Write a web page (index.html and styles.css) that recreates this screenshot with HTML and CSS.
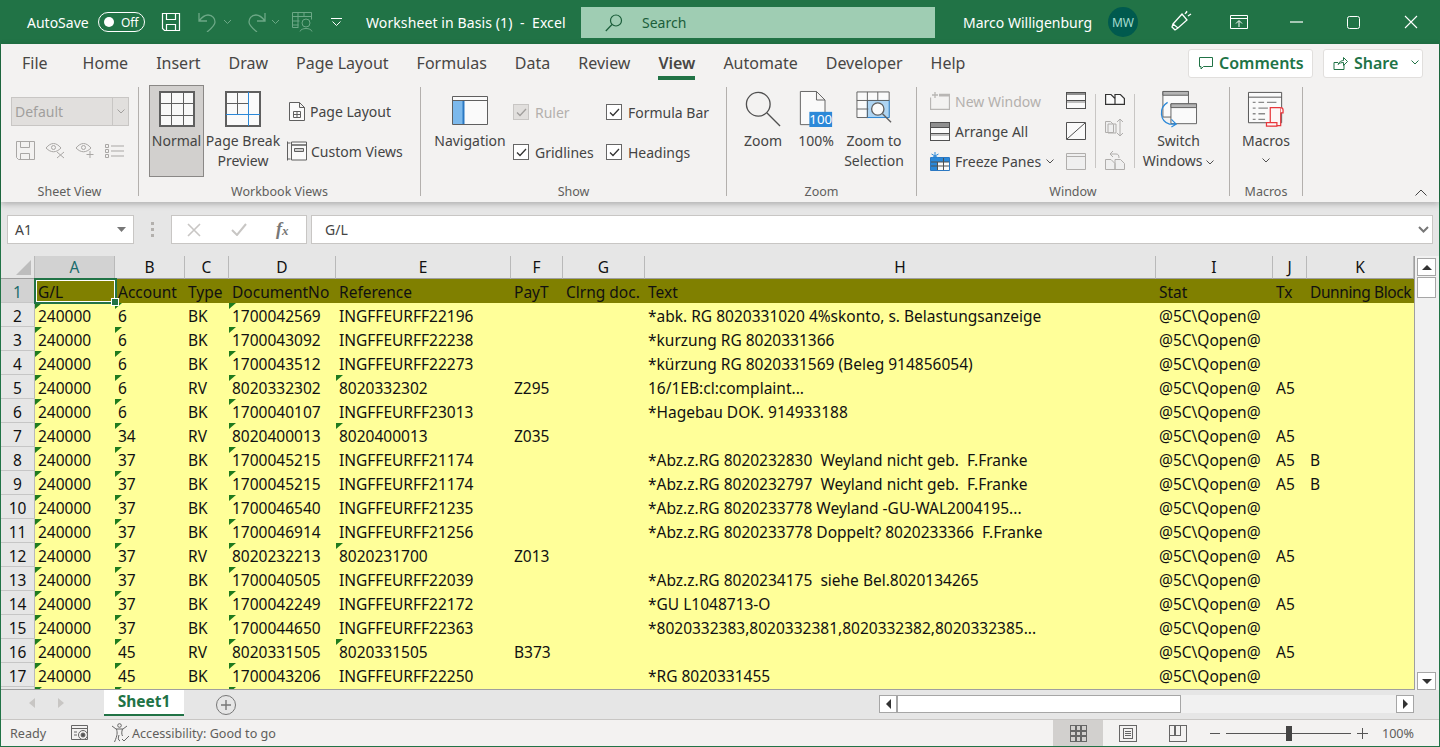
FILE: index.html
```html
<!DOCTYPE html>
<html lang="en">
<head>
    <meta charset="UTF-8">
    <meta name="viewport" content="width=device-width, initial-scale=1.0">
    <title>Worksheet in Basis (1) - Excel</title>
    <link rel="stylesheet" href="styles.css">
</head>
<body>
<div class="app">
    <!-- title bar -->
    <div class="titlebar">
        <span class="autosave">AutoSave</span>
        <span class="toggle"><i></i>Off</span>
        <svg class="qa-save" width="20" height="20" viewBox="0 0 20 20" fill="none" stroke="#fff" stroke-width="1.200"><path d="M1.500 1.500h17v17h-15l-2-2z"/><path d="M5.500 1.500v6h9v-6M5.500 18.500v-6h9v6"/></svg>
        <svg class="qa-undo" width="22" height="20" viewBox="0 0 22 20" fill="none" stroke="#6ca886" stroke-width="1.300"><path d="M2 1v8h8M2 9c3-4 6-6 9-6 5 0 7 4 7 7 0 3-3 6-8 10"/></svg>
        <svg class="qa-chev" width="9" height="6" viewBox="0 0 9 6" fill="none" stroke="#6ca886"><path d="M1 1l3.500 3.500L8 1"/></svg>
        <svg class="qa-redo" width="22" height="20" viewBox="0 0 22 20" fill="none" stroke="#6ca886" stroke-width="1.300"><path d="M20 1v8h-8M20 9c-3-4-6-6-9-6-5 0-7 4-7 7 0 3 3 6 8 10"/></svg>
        <svg class="qa-chev" width="9" height="6" viewBox="0 0 9 6" fill="none" stroke="#6ca886"><path d="M1 1l3.500 3.500L8 1"/></svg>
        <svg class="qa-table" width="21" height="20" viewBox="0 0 21 20" fill="none" stroke="#6ca886"><path d="M.5.500h19v7M.5.500v15h6M.5 4.500h19M.5 9h7M.5 13h6M6 1v14M12 1v4"/><circle cx="14" cy="11" r="4"/><path d="M8 19.500c1-4 11-4 12 0"/></svg>
        <svg class="qa-more" width="11" height="9" viewBox="0 0 11 9" fill="none" stroke="#fff"><path d="M0 .5h11M1.500 3.500L5.500 7.500l4-4"/></svg>
        <span class="doc-title">Worksheet in Basis (1)  -  Excel</span>
        <div class="searchbox">
            <svg width="18" height="18" viewBox="0 0 18 18" fill="none" stroke="#1b5e3a" stroke-width="1.200"><circle cx="11" cy="6.500" r="5.500"/><path d="M7 10.500L.8 17"/></svg>
            <span>Search</span>
        </div>
        <span class="username">Marco Willigenburg</span>
        <span class="avatar">MW</span>
        <svg class="tb-feedback" width="21" height="21" viewBox="0 0 21 21" fill="none" stroke="#fff" stroke-width="1.300"><path d="M2 14L11 4l5 6-9 8zM2 14l-1 3 3 3 3-2M14 4l2-3M17 6l3-2M15.500 2.500l.5.5"/></svg>
        <svg class="tb-display" width="18" height="14" viewBox="0 0 18 14" fill="none" stroke="#fff"><path d="M.5.500h17v13H.5zM.5 3.500h17M9 12V6M6 8.500L9 5.500l3 3"/></svg>
        <svg class="tb-min" width="13" height="2" viewBox="0 0 13 2"><path d="M0 1h13" stroke="#fff" stroke-width="1.200"/></svg>
        <svg class="tb-max" width="13" height="13" viewBox="0 0 13 13" fill="none" stroke="#fff"><rect x=".5" y=".5" width="12" height="12" rx="2"/></svg>
        <svg class="tb-close" width="14" height="14" viewBox="0 0 14 14" fill="none" stroke="#fff" stroke-width="1.100"><path d="M1 1l12 12M13 1L1 13"/></svg>
    </div>

    <!-- ribbon tabs -->
    <div class="ribbon">
        <div class="tabs">
            <span class="tab tab-file">File</span>
            <span class="tab">Home</span>
            <span class="tab">Insert</span>
            <span class="tab">Draw</span>
            <span class="tab">Page Layout</span>
            <span class="tab">Formulas</span>
            <span class="tab">Data</span>
            <span class="tab">Review</span>
            <span class="tab tab-active">View</span>
            <span class="tab">Automate</span>
            <span class="tab">Developer</span>
            <span class="tab">Help</span>
            <span class="tab-actions">
                <span class="action action-comments">
                    <svg width="14" height="14" viewBox="0 0 14 14" fill="none" stroke="#217346"><path d="M.5 1.500h13v9H4.500l-2.500 2.500v-2.500H.5z"/></svg>
                    Comments
                </span>
                <span class="action action-share">
                    <svg width="15" height="14" viewBox="0 0 15 14" fill="none" stroke="#217346"><path d="M1 13.500V6.500h4M1 13.500h10V9M5 8.500c1-3 4-4 5.500-4V1.500l4 4-4 4v-3c-2 0-4 .5-5.500 2z"/></svg>
                    Share
                    <svg class="share-chev" width="8" height="5" viewBox="0 0 8 5" fill="none" stroke="#217346"><path d="M.5.5L4 4 7.500.5"/></svg>
                </span>
            </span>
        </div>

        <!-- ribbon groups -->
        <div class="ribbon-body">
            <div class="group group-sheetview">
                <div class="group-main">
                    <div class="sheetview-col">
                        <div class="view-select"><span>Default</span><b><svg width="8" height="5" viewBox="0 0 8 5" fill="none" stroke="#a19f9d"><path d="M.5.5L4 4 7.500.5"/></svg></b></div>
                        <div class="sheetview-icons">
                            <svg width="19" height="19" viewBox="0 0 19 19" fill="none" stroke="#a9a7a5"><path d="M.5.500h18v18H2.500l-2-2z"/><path d="M4.500.5v6h9v-6M4.500 18.500v-6h9v6"/></svg>
                            <svg width="20" height="17" viewBox="0 0 20 17" fill="none" stroke="#a9a7a5"><path d="M1 6c5-6 10-6 15 0-5 5-10 5-15 0z"/><circle cx="8.500" cy="5.500" r="2"/><path d="M12 10l7 6M19 10l-7 6"/></svg>
                            <svg width="20" height="17" viewBox="0 0 20 17" fill="none" stroke="#a9a7a5"><path d="M1 6c5-6 10-6 15 0-5 5-10 5-15 0z"/><circle cx="8.500" cy="5.500" r="2"/><path d="M15 9v7M11.500 12.500h7"/></svg>
                            <svg width="19" height="14" viewBox="0 0 19 14" fill="none" stroke="#a9a7a5"><path d="M.5.500h3v3h-3zM.5 5.500h3v3h-3zM.5 10.500h3v3h-3zM6 2h13M6 7h13M6 12h13"/></svg>
                        </div>
                    </div>
                </div>
                <div class="group-label">Sheet View</div>
            </div>
            <div class="sep"></div>

            <div class="group group-workbook">
                <div class="group-main">
                    <div class="big big-normal active">
                        <svg class="big-icon" width="36" height="36" viewBox="0 0 36 36" fill="#f8f8f8" stroke="#5f5f5f" shape-rendering="crispEdges"><path d="M1 1h34v34H1z" stroke-width="2"/><path d="M12.500 1v34M24.500 1v34M1 12.500h34M1 24.500h34" fill="none"/></svg>
                        <span>Normal</span>
                    </div>
                    <div class="big big-break">
                        <svg class="big-icon" width="36" height="36" viewBox="0 0 36 36" fill="#fafafa" stroke="#5f5f5f" shape-rendering="crispEdges"><path d="M1 1h34v34H1z" stroke-width="2"/><path d="M12.500 1v22M1 12.500h22" fill="none"/><path d="M23.500 1v34M1 23.500h34" fill="none" stroke="#2b88d8" stroke-width="1"/></svg>
                        <span>Page Break<br>Preview</span>
                    </div>
                    <div class="small-col workbook-small">
                        <div class="small small-layout">
                            <svg width="16" height="19" viewBox="0 0 16 19" fill="#fafafa" stroke="#5f5f5f"><path d="M.5.500h10l5 5v13H.5zM10.500.5v5h5"/><path d="M4.500 9.500h7v6h-7zM8 9.500v6M4.500 12.500h7" fill="none"/></svg>
                            Page Layout
                        </div>
                        <div class="small small-custom">
                            <svg width="20" height="20" viewBox="0 0 20 20" fill="#fafafa" stroke="#5f5f5f"><path d="M.5.500v19M.5 2h3M.5 18h3M4.500 1h15v3h-15zM4.500 4h15v15h-15z"/><path d="M7.500 7.500h9v3h-9z" fill="#d0d0d0"/></svg>
                            Custom Views
                        </div>
                    </div>
                </div>
                <div class="group-label">Workbook Views</div>
            </div>
            <div class="sep"></div>

            <div class="group group-show">
                <div class="group-main">
                    <div class="big big-nav">
                        <svg class="big-icon" width="36" height="36" viewBox="0 0 36 36" fill="#fafafa" stroke="#5f5f5f"><path d="M.5 5.500h35v28H.5zM.5 9.500h35"/><path d="M1 10h11v23H1z" fill="#7cb9ec" stroke="none"/><path d="M11.500 10v23" stroke="#2b78c2" stroke-width="2"/></svg>
                        <span>Navigation</span>
                    </div>
                    <div class="check-col">
                        <label class="check disabled"><i><svg width="11" height="9" viewBox="0 0 11 9" fill="none" stroke="#a19f9d" stroke-width="1.300"><path d="M1 4.500L4 7.500 10 1"/></svg></i>Ruler</label>
                        <label class="check"><i><svg width="11" height="9" viewBox="0 0 11 9" fill="none" stroke="#333" stroke-width="1.300"><path d="M1 4.500L4 7.500 10 1"/></svg></i>Gridlines</label>
                    </div>
                    <div class="check-col check-col-2">
                        <label class="check"><i><svg width="11" height="9" viewBox="0 0 11 9" fill="none" stroke="#333" stroke-width="1.300"><path d="M1 4.500L4 7.500 10 1"/></svg></i>Formula Bar</label>
                        <label class="check"><i><svg width="11" height="9" viewBox="0 0 11 9" fill="none" stroke="#333" stroke-width="1.300"><path d="M1 4.500L4 7.500 10 1"/></svg></i>Headings</label>
                    </div>
                </div>
                <div class="group-label">Show</div>
            </div>
            <div class="sep"></div>

            <div class="group group-zoom">
                <div class="group-main">
                    <div class="big big-zoom">
                        <svg class="big-icon" width="38" height="38" viewBox="0 0 38 38" fill="none" stroke="#505050" stroke-width="1.400"><circle cx="14" cy="14" r="12.500"/><path d="M23 23l14 14"/></svg>
                        <span>Zoom</span>
                    </div>
                    <div class="big big-100">
                        <svg class="big-icon" width="36" height="38" viewBox="0 0 36 38" fill="#fafafa" stroke="#5f5f5f"><path d="M1.500.5h17l9 9v26h-26zM18.500.5v9h9"/><path d="M11 22h24v16H11z" fill="#2b88d8" stroke="none"/><text x="23" y="35" class="pct-text">100</text></svg>
                        <span>100%</span>
                    </div>
                    <div class="big big-zoomsel">
                        <svg class="big-icon" width="38" height="38" viewBox="0 0 38 38" fill="#fafafa" stroke="#5f5f5f"><path d="M1 1h34v27H1z"/><path d="M12 10h23v18H12z" fill="#aed4f2" stroke="#2b88d8"/><path d="M1 10h34M1 19h12M12 1v27M23 1v9"/><circle cx="23" cy="19" r="6.500" fill="#fafafa" stroke-width="1.400"/><path d="M28 24l9 9" stroke-width="1.400"/></svg>
                        <span>Zoom to<br>Selection</span>
                    </div>
                </div>
                <div class="group-label">Zoom</div>
            </div>
            <div class="sep"></div>

            <div class="group group-window">
                <div class="group-main">
                    <div class="small-col window-small">
                        <div class="wrow disabled">
                            <svg width="20" height="18" viewBox="0 0 20 18" fill="none" stroke="#b8b6b4" stroke-width="1.300"><path d="M9 2.500h10.500v15H.5V5.500M5 0v6M2 3h6"/><path d="M9 3.500h10" stroke-width="2"/></svg>
                            New Window
                        </div>
                        <div class="wrow">
                            <svg width="20" height="19" viewBox="0 0 20 19" fill="#fafafa" stroke="#505050" shape-rendering="crispEdges"><path d="M.5.500h19v18H.5z"/><path d="M1 1h18v4H1z" fill="#8f8f8f" stroke="none"/><path d="M1 5.500h18M1 11.500h18"/><path d="M1 12h18v2H1z" fill="#bdbdbd" stroke="none"/></svg>
                            Arrange All
                        </div>
                        <div class="wrow">
                            <svg width="20" height="19" viewBox="0 0 20 19" fill="#fafafa" stroke="#2b78c2"><path d="M.5 5.500h19v13H.5z"/><path d="M1 6h18v4H1zM1 10h6v8H1z" fill="#2b88d8" stroke="none"/><path d="M7.500 10v8M13.500 6v12M1 10h18M1 14h18" stroke="#505050"/><path d="M5 0v8M1.500 2l7 4M8.500 2l-7 4" stroke="#2b88d8"/></svg>
                            Freeze Panes <svg class="chev" width="8" height="5" viewBox="0 0 8 5" fill="none" stroke="#505050"><path d="M.5.5L4 4 7.500.5"/></svg>
                        </div>
                    </div>
                    <div class="icon-col icon-col-1">
                        <svg width="20" height="17" viewBox="0 0 20 17" fill="#fafafa" stroke="#505050" shape-rendering="crispEdges"><path d="M.5.500h19v16H.5z"/><path d="M1 1h18v2H1z" fill="#8f8f8f" stroke="none"/><path d="M1 8.500h18"/><path d="M1 9h18v2H1z" fill="#bdbdbd" stroke="none"/></svg>
                        <svg width="20" height="18" viewBox="0 0 20 18" fill="#fafafa" stroke="#505050"><path d="M.5.500h19v17H.5z"/><path d="M1 17L19 1"/></svg>
                        <svg width="20" height="17" viewBox="0 0 20 17" fill="#efefef" stroke="#b0aeac"><path d="M.5.500h19v16H.5zM.5 3.500h19"/></svg>
                    </div>
                    <div class="mini-sep"></div>
                    <div class="icon-col icon-col-2">
                        <svg width="20" height="12" viewBox="0 0 20 12" fill="#fafafa" stroke="#333" stroke-width="1.200"><path d="M.6 11.400V1.500h5.400l4 4v5.900zM10 11.400V1.500h5.400l4 4v5.900z"/></svg>
                        <svg width="20" height="19" viewBox="0 0 20 19" fill="#efefef" stroke="#b0aeac"><path d="M.5 3.500h5l3 3v8h-8zM3 6h8v9H3zM15 1v17M12 4l3-3 3 3M12 15l3 3 3-3"/></svg>
                        <svg width="20" height="20" viewBox="0 0 20 20" fill="#efefef" stroke="#b0aeac"><path d="M.5 19.500V9.500h5.500l4 4v6zM10 19.500V9.500h5.500l4 4v6z"/><path d="M5 4h6c2 0 3 1 3 4M5 4l3-3M5 4l3 3" fill="none"/></svg>
                    </div>
                    <div class="mini-sep"></div>
                    <div class="big big-switch">
                        <svg class="big-icon" width="38" height="38" viewBox="0 0 38 38" fill="#fafafa" stroke="#5f5f5f"><path d="M2 .5h27v27H2z"/><path d="M2 .5h27v4H2z" fill="#b5b5b5"/><path d="M10.500 13.500h27v21h-27z"/><path d="M10.500 13.500h27v4h-27z" fill="#b5b5b5"/><path d="M7 12C-3 18-1 32 9 35l7 0M11 30l5 5-5 3" fill="none" stroke="#2b88d8" stroke-width="1.300"/></svg>
                        <span>Switch<br>Windows <svg class="chev" width="8" height="5" viewBox="0 0 8 5" fill="none" stroke="#505050"><path d="M.5.5L4 4 7.500.5"/></svg></span>
                    </div>
                </div>
                <div class="group-label">Window</div>
            </div>
            <div class="sep"></div>

            <div class="group group-macros">
                <div class="group-main">
                    <div class="big big-macros">
                        <svg class="big-icon" width="38" height="38" viewBox="0 0 38 38" fill="#fafafa" stroke="#505050"><path d="M.5 1.500h35v32H.5zM.5 6.500h35"/><path d="M5 12h3M11 12h6M20 12h10M5 18h3M11 18h10M5 24h3M11 24h7M5 30h3M11 30h7" stroke="#8a8a8a" stroke-width="1.400"/><g fill="#fdf6f6" stroke="#e8373c" stroke-width="1.300"><path d="M23.500 17.500h11v19h-11z"/><path d="M34.500 17.500c1.500 0 2.500 1 2.500 2.500v3h-2.500"/><path d="M19.500 33.500h11v3.500h-11z"/></g></svg>
                        <span>Macros</span>
                        <svg class="macro-chev" width="8" height="5" viewBox="0 0 8 5" fill="none" stroke="#505050"><path d="M.5.5L4 4 7.500.5"/></svg>
                    </div>
                </div>
                <div class="group-label">Macros</div>
            </div>
            <div class="sep"></div>

            <svg class="collapse" width="12" height="7" viewBox="0 0 12 7" fill="none" stroke="#444"><path d="M.5 6.500L6 1l5.500 5.500"/></svg>
        </div>
    </div>

    <!-- formula bar -->
    <div class="formulabar">
        <div class="namebox">A1<svg width="9" height="5" viewBox="0 0 9 5"><path d="M0 0h9L4.500 5z" fill="#777"/></svg></div>
        <div class="fb-dots"><i></i><i></i><i></i></div>
        <div class="fb-buttons">
            <svg width="16" height="14" viewBox="0 0 16 14" fill="none" stroke="#c8c6c4" stroke-width="1.600"><path d="M2 1l12 12M14 1L2 13"/></svg>
            <svg width="16" height="13" viewBox="0 0 16 13" fill="none" stroke="#c8c6c4" stroke-width="2"><path d="M1 7l5 5L15 1"/></svg>
            <span class="fx">f<small>x</small></span>
        </div>
        <div class="fb-input">G/L<svg width="11" height="7" viewBox="0 0 11 7" fill="none" stroke="#777" stroke-width="2"><path d="M1 1l4.500 4.500L10 1"/></svg></div>
    </div>

    <!-- sheet -->
    <div class="sheet">
        <div class="grid-wrap">
            <table class="grid">
                <colgroup>
                    <col class="c-row"><col class="c-a"><col class="c-b"><col class="c-c"><col class="c-d"><col class="c-e"><col class="c-f"><col class="c-g"><col class="c-h"><col class="c-i"><col class="c-j"><col class="c-k">
                </colgroup>
                <tr class="col-heads">
                    <th class="corner"><i></i></th><th class="on">A</th><th>B</th><th>C</th><th>D</th><th>E</th><th>F</th><th>G</th><th>H</th><th>I</th><th>J</th><th>K</th>
                </tr>
                <tr class="head-row">
                    <th class="on">1</th><td class="sel">G/L</td><td>Account</td><td>Type</td><td>DocumentNo</td><td>Reference</td><td>PayT</td><td>Clrng doc.</td><td>Text</td><td>Stat</td><td>Tx</td><td class="tight">Dunning Block</td>
                </tr>
                <tr><th>2</th><td class="m">240000</td><td class="m">6</td><td>BK</td><td class="m">1700042569</td><td>INGFFEURFF22196</td><td></td><td></td><td>*abk. RG 8020331020 4%skonto, s. Belastungsanzeige</td><td>@5C\Qopen@</td><td></td><td></td></tr>
                <tr><th>3</th><td class="m">240000</td><td class="m">6</td><td>BK</td><td class="m">1700043092</td><td>INGFFEURFF22238</td><td></td><td></td><td>*kurzung RG 8020331366</td><td>@5C\Qopen@</td><td></td><td></td></tr>
                <tr><th>4</th><td class="m">240000</td><td class="m">6</td><td>BK</td><td class="m">1700043512</td><td>INGFFEURFF22273</td><td></td><td></td><td>*kürzung RG 8020331569 (Beleg 914856054)</td><td>@5C\Qopen@</td><td></td><td></td></tr>
                <tr><th>5</th><td class="m">240000</td><td class="m">6</td><td>RV</td><td class="m">8020332302</td><td class="m">8020332302</td><td>Z295</td><td></td><td>16/1EB:cl:complaint...</td><td>@5C\Qopen@</td><td>A5</td><td></td></tr>
                <tr><th>6</th><td class="m">240000</td><td class="m">6</td><td>BK</td><td class="m">1700040107</td><td>INGFFEURFF23013</td><td></td><td></td><td>*Hagebau DOK. 914933188</td><td>@5C\Qopen@</td><td></td><td></td></tr>
                <tr><th>7</th><td class="m">240000</td><td class="m">34</td><td>RV</td><td class="m">8020400013</td><td class="m">8020400013</td><td>Z035</td><td></td><td></td><td>@5C\Qopen@</td><td>A5</td><td></td></tr>
                <tr><th>8</th><td class="m">240000</td><td class="m">37</td><td>BK</td><td class="m">1700045215</td><td>INGFFEURFF21174</td><td></td><td></td><td>*Abz.z.RG 8020232830  Weyland nicht geb.  F.Franke</td><td>@5C\Qopen@</td><td>A5</td><td>B</td></tr>
                <tr><th>9</th><td class="m">240000</td><td class="m">37</td><td>BK</td><td class="m">1700045215</td><td>INGFFEURFF21174</td><td></td><td></td><td>*Abz.z.RG 8020232797  Weyland nicht geb.  F.Franke</td><td>@5C\Qopen@</td><td>A5</td><td>B</td></tr>
                <tr><th>10</th><td class="m">240000</td><td class="m">37</td><td>BK</td><td class="m">1700046540</td><td>INGFFEURFF21235</td><td></td><td></td><td>*Abz.z.RG 8020233778 Weyland -GU-WAL2004195...</td><td>@5C\Qopen@</td><td></td><td></td></tr>
                <tr><th>11</th><td class="m">240000</td><td class="m">37</td><td>BK</td><td class="m">1700046914</td><td>INGFFEURFF21256</td><td></td><td></td><td>*Abz.z.RG 8020233778 Doppelt? 8020233366  F.Franke</td><td>@5C\Qopen@</td><td></td><td></td></tr>
                <tr><th>12</th><td class="m">240000</td><td class="m">37</td><td>RV</td><td class="m">8020232213</td><td class="m">8020231700</td><td>Z013</td><td></td><td></td><td>@5C\Qopen@</td><td>A5</td><td></td></tr>
                <tr><th>13</th><td class="m">240000</td><td class="m">37</td><td>BK</td><td class="m">1700040505</td><td>INGFFEURFF22039</td><td></td><td></td><td>*Abz.z.RG 8020234175  siehe Bel.8020134265</td><td>@5C\Qopen@</td><td></td><td></td></tr>
                <tr><th>14</th><td class="m">240000</td><td class="m">37</td><td>BK</td><td class="m">1700042249</td><td>INGFFEURFF22172</td><td></td><td></td><td>*GU L1048713-O</td><td>@5C\Qopen@</td><td>A5</td><td></td></tr>
                <tr><th>15</th><td class="m">240000</td><td class="m">37</td><td>BK</td><td class="m">1700044650</td><td>INGFFEURFF22363</td><td></td><td></td><td>*8020332383,8020332381,8020332382,8020332385...</td><td>@5C\Qopen@</td><td></td><td></td></tr>
                <tr><th>16</th><td class="m">240000</td><td class="m">45</td><td>RV</td><td class="m">8020331505</td><td class="m">8020331505</td><td>B373</td><td></td><td></td><td>@5C\Qopen@</td><td>A5</td><td></td></tr>
                <tr><th>17</th><td class="m">240000</td><td class="m">45</td><td>BK</td><td class="m">1700043206</td><td>INGFFEURFF22250</td><td></td><td></td><td>*RG 8020331455</td><td>@5C\Qopen@</td><td></td><td></td></tr>
                <tr><th></th><td class="m"></td><td class="m"></td><td></td><td class="m"></td><td></td><td></td><td></td><td></td><td></td><td></td><td></td></tr>
            </table>
        </div>
        <div class="vscroll">
            <div class="sb-btn"><svg width="10" height="5" viewBox="0 0 10 5"><path d="M5 0l5 5H0z" fill="#333"/></svg></div>
            <div class="sb-thumb"></div>
            <div class="sb-track"></div>
            <div class="sb-btn"><svg width="10" height="5" viewBox="0 0 10 5"><path d="M0 0h10L5 5z" fill="#333"/></svg></div>
        </div>
    </div>

    <!-- sheet tabs -->
    <div class="tabbar">
        <div class="tab-nav">
            <svg width="6" height="10" viewBox="0 0 6 10"><path d="M6 0v10L0 5z" fill="#c8c6c4"/></svg>
            <svg width="6" height="10" viewBox="0 0 6 10"><path d="M0 0v10l6-5z" fill="#c8c6c4"/></svg>
        </div>
        <div class="sheet-tab">Sheet1</div>
        <svg class="add-sheet" width="20" height="20" viewBox="0 0 20 20" fill="none" stroke="#777"><circle cx="10" cy="10" r="9.500"/><path d="M10 5v10M5 10h10" stroke-width="1.400"/></svg>
        <div class="hscroll">
            <div class="hs-btn"><svg width="5" height="10" viewBox="0 0 5 10"><path d="M5 0v10L0 5z" fill="#333"/></svg></div>
            <div class="hs-thumb"></div>
            <div class="hs-track"></div>
            <div class="hs-btn"><svg width="5" height="10" viewBox="0 0 5 10"><path d="M0 0v10l5-5z" fill="#333"/></svg></div>
        </div>
    </div>

    <!-- status bar -->
    <div class="statusbar">
        <span class="ready">Ready</span>
        <svg class="st-macro" width="18" height="16" viewBox="0 0 18 16" fill="none" stroke="#666"><path d="M.5.500h16v14H.5zM.5 3.500h16M3 7h3M3 10h3"/><circle cx="12" cy="10" r="4.500" fill="#f3f2f1"/><circle cx="12" cy="10" r="2" fill="#555"/></svg>
        <svg class="st-access" width="20" height="20" viewBox="0 0 20 20" fill="none" stroke="#666"><circle cx="8.500" cy="2.500" r="1.800"/><path d="M1 3l4 3h7l4-3M5.500 6c1 4 1 6-2 13M11.500 6c-1 3-1 5 0 7M8 12c-1 3-1 5 1 6M11 16l2 2 5-5"/></svg>
        <span class="access-text">Accessibility: Good to go</span>
        <span class="views">
            <span class="view-btn active"><svg width="17" height="17" viewBox="0 0 17 17" fill="none" stroke="#666" stroke-width="1.200" shape-rendering="crispEdges"><path d="M.5.500h16v16H.5zM6 .5v16M11 .5v16M.5 6h16M.5 11h16"/></svg></span>
            <span class="view-btn"><svg width="18" height="17" viewBox="0 0 18 17" fill="none" stroke="#666" shape-rendering="crispEdges"><path d="M.5.500h17v16H.5zM4.500 3.500h9v10h-9zM6 6.500h6M6 8.500h6M6 10.500h6"/></svg></span>
            <span class="view-btn"><svg width="18" height="17" viewBox="0 0 18 17" fill="none" stroke="#666" stroke-width="1.200" shape-rendering="crispEdges"><path d="M.5.500h17v16H.5zM.5 10.500h11M6 .5v10M11.500 .5v10"/></svg></span>
        </span>
        <svg class="zoom-minus" width="10" height="1" viewBox="0 0 10 1"><path d="M0 .5h10" stroke="#555"/></svg>
        <div class="zoom-slider"><i></i></div>
        <svg class="zoom-plus" width="11" height="11" viewBox="0 0 11 11"><path d="M0 5.500h11M5.500 0v11" stroke="#555"/></svg>
        <span class="zoom-value">100%</span>
    </div>
</div>
</body>
</html>
```

FILE: styles.css
```css
* {
    box-sizing: border-box;
}

html, body {
    margin: 0;
    height: 100%;
    overflow: hidden;
}

body {
    font-family: "Noto Sans", "Open Sans", sans-serif;
    color: #444;
}

svg {
    display: block;
    flex: none;
}

.app {
    width: 1440px;
    height: 747px;
    display: flex;
    flex-direction: column;
    border: 1px solid #217346;
    border-width: 0 1px 1px 1px;
    background-color: #e6e6e6;
}

/* title bar */
.titlebar {
    height: 44px;
    flex: none;
    margin: 0 -1px;
    padding-left: 27px;
    display: flex;
    align-items: center;
    background-color: #217346;
    color: #fff;
    font-size: 14px;
}

.autosave {
    width: 71px;
}

.toggle {
    width: 47px;
    height: 20px;
    border: 1px solid #fff;
    border-radius: 10px;
    display: flex;
    align-items: center;
    padding-left: 5px;
    font-size: 12px;
    gap: 7px;
}

.toggle i {
    width: 10px;
    height: 10px;
    border-radius: 50%;
    background-color: #fff;
}

.qa-save { margin-left: 16px; }
.qa-undo { margin-left: 16px; }
.qa-chev { margin-left: 4px; }
.qa-redo { margin-left: 13px; }
.qa-table { margin-left: 12px; }
.qa-more { margin-left: 18px; }

.doc-title {
    margin-left: 24px;
    width: 215px;
    white-space: pre;
    letter-spacing: 0.1px;
}

.searchbox {
    width: 354px;
    height: 31px;
    margin-top: 1px;
    padding-left: 24px;
    display: flex;
    align-items: center;
    gap: 19px;
    background-color: #9fcdb3;
    color: #1b5e3a;
}

.username {
    margin-left: 28px;
    width: 145px;
}

.avatar {
    width: 30px;
    height: 30px;
    border-radius: 50%;
    background-color: #005a4e;
    color: #a5dcd0;
    font-size: 12px;
    display: flex;
    align-items: center;
    justify-content: center;
}

.tb-feedback { margin-left: 33px; margin-bottom: 3px; }
.tb-display { margin-left: 38px; }
.tb-min { margin-left: 42px; }
.tb-max { margin-left: 44px; }
.tb-close { margin-left: 44px; }

/* ribbon */
.ribbon {
    height: 158px;
    flex: none;
    background-color: #f3f2f1;
    box-shadow: 0 2px 6px rgba(0, 0, 0, 0.25);
    position: relative;
    z-index: 2;
}

.tabs {
    height: 36px;
    padding-left: 21px;
    display: flex;
    gap: 28px;
    font-size: 16px;
    color: #484644;
}

.tab {
    height: 36px;
    padding-top: 7px;
    line-height: 24px;
    white-space: nowrap;
}

.tab-file {
    margin-right: 7px;
}

.tab-active {
    font-weight: 600;
    border-bottom: 4px solid #217346;
    height: 36px;
}

.tab-actions {
    margin-left: auto;
    margin-right: 16px;
    display: flex;
    gap: 10px;
    padding-top: 5px;
}

.action {
    height: 29px;
    padding-bottom: 2px;
    background-color: #fff;
    border: 1px solid #e1dfdd;
    border-radius: 3px;
    display: flex;
    align-items: center;
    color: #217346;
    font-weight: 600;
    gap: 6px;
}

.action-comments {
    width: 125px;
    padding-left: 10px;
}

.action-share {
    width: 100px;
    padding-left: 9px;
}

.share-chev {
    margin-left: 7px;
}

.ribbon-body {
    height: 122px;
    display: flex;
    position: relative;
    font-size: 14px;
}

.sep {
    width: 1px;
    margin: 7px 0 6px;
    background-color: #b3b0ad;
}

.group {
    display: flex;
    flex-direction: column;
    padding-top: 5px;
}

.group-main {
    flex: 1;
    display: flex;
    align-items: flex-start;
    min-height: 0;
}

.group-label {
    height: 20px;
    line-height: 20px;
    font-size: 12.5px;
    text-align: center;
    color: #605e5c;
}

.group-sheetview { width: 137px; }
.group-workbook { width: 281px; }
.group-show { width: 305px; }
.group-zoom { width: 189px; }
.group-window { width: 312px; }
.group-macros { width: 72px; }

.sheetview-col {
    margin: 12px 0 0 10px;
}

.view-select {
    width: 118px;
    height: 29px;
    display: flex;
    background-color: #e1dfdd;
    border: 1px solid #c8c6c4;
    color: #a19f9d;
    line-height: 27px;
    padding-left: 3px;
}

.view-select span {
    flex: 1;
}

.view-select b {
    width: 16px;
    border-left: 1px solid #c8c6c4;
    display: flex;
    align-items: center;
    justify-content: center;
}

.sheetview-icons {
    margin: 15px 0 0 5px;
    display: flex;
    align-items: center;
    gap: 10px;
}

.big {
    padding-top: 6px;
    display: flex;
    flex-direction: column;
    align-items: center;
    text-align: center;
    line-height: 20px;
    white-space: nowrap;
}

.big-icon {
    height: 36px;
    margin-bottom: 4px;
    overflow: visible;
}

.big-normal {
    width: 55px;
    height: 92px;
    margin-left: 10px;
    border: 1px solid #8a8886;
    background-color: #d2d0ce;
    padding-top: 5px;
}

.big-break {
    width: 74px;
    margin-left: 2px;
}

.workbook-small {
    margin-left: 9px;
}

.small {
    display: flex;
    align-items: center;
    white-space: nowrap;
    height: 24px;
}

.small-layout {
    margin-top: 14px;
    gap: 5px;
}

.small-custom {
    margin-top: 16px;
    margin-left: -2px;
    gap: 4px;
}

.big-nav {
    width: 74px;
    margin-left: 12px;
}

.check-col {
    margin: 15px 0 0 6px;
    display: flex;
    flex-direction: column;
    gap: 16px;
    width: 87px;
}

.check-col-2 {
    width: auto;
}

.check {
    height: 24px;
    display: flex;
    align-items: center;
    gap: 6px;
    white-space: nowrap;
}

.check i {
    width: 16px;
    height: 16px;
    background-color: #fff;
    border: 1px solid #666;
    display: flex;
    align-items: center;
    justify-content: center;
}

.disabled {
    color: #b3b0ad;
}

.check.disabled i {
    background-color: #e1dfdd;
    border-color: #c8c6c4;
}

.big-zoom {
    width: 50px;
    margin-left: 11px;
}

.big-100 {
    width: 48px;
    margin-left: 4px;
}

.big-zoomsel {
    width: 64px;
    margin-left: 2px;
}

.pct-text {
    font-family: "Noto Sans", sans-serif;
    font-size: 14px;
    fill: #fff;
    stroke: none;
    text-anchor: middle;
}

.window-small {
    margin: 1px 0 0 13px;
    width: 135px;
    display: flex;
    flex-direction: column;
}

.wrow {
    height: 30px;
    display: flex;
    align-items: center;
    gap: 5px;
    white-space: nowrap;
}

.chev {
    display: inline-block;
    vertical-align: middle;
}

.icon-col {
    margin-top: 1px;
    width: 20px;
    height: 90px;
    display: flex;
    flex-direction: column;
    justify-content: space-around;
    align-items: center;
}

.icon-col-1 {
    margin-left: 1px;
}

.mini-sep {
    width: 1px;
    height: 74px;
    margin: 9px 9px 0;
    background-color: #c8c6c4;
}

.big-switch {
    width: 75px;
    margin-left: -3px;
}

.big-macros {
    width: 72px;
}

.macro-chev {
    margin-top: 7px;
}

.collapse {
    position: absolute;
    right: 12px;
    bottom: 6px;
}

/* formula bar */
.formulabar {
    height: 54px;
    flex: none;
    padding: 13px 6px 0;
    display: flex;
    align-items: flex-start;
    font-size: 14px;
    color: #444;
}

.namebox {
    width: 127px;
    height: 29px;
    background-color: #fff;
    border: 1px solid #c8c6c4;
    padding: 0 7px;
    display: flex;
    align-items: center;
    justify-content: space-between;
}

.fb-dots {
    width: 37px;
    height: 29px;
    display: flex;
    flex-direction: column;
    align-items: center;
    justify-content: center;
    gap: 3px;
}

.fb-dots i {
    width: 3px;
    height: 3px;
    background-color: #b3b0ad;
}

.fb-buttons {
    width: 136px;
    height: 29px;
    background-color: #fff;
    border: 1px solid #c8c6c4;
    display: flex;
    align-items: center;
    gap: 29px;
    padding-left: 14px;
}

.fx {
    font-family: "Liberation Serif", serif;
    font-style: italic;
    font-weight: 700;
    font-size: 18px;
    color: #777;
}

.fx small {
    font-size: 13px;
}

.fb-input {
    flex: 1;
    height: 29px;
    margin-left: 4px;
    padding: 0 3px 0 13px;
    background-color: #fff;
    border: 1px solid #c8c6c4;
    display: flex;
    align-items: center;
    justify-content: space-between;
}

/* sheet */
.sheet {
    height: 434px;
    flex: none;
    display: flex;
}

.grid-wrap {
    width: 1414px;
    overflow: hidden;
    border-bottom: 1px solid #9f9f9f;
    border-right: 1px solid #9f9f9f;
}

.grid {
    table-layout: fixed;
    width: 1413px;
    border-collapse: separate;
    border-spacing: 0;
    font-size: 15.5px;
    color: #111;
}

.c-row { width: 34px; }
.c-a { width: 80px; }
.c-b { width: 70px; }
.c-c { width: 44px; }
.c-d { width: 107px; }
.c-e { width: 175px; }
.c-f { width: 52px; }
.c-g { width: 82px; }
.c-h { width: 511px; }
.c-i { width: 117px; }
.c-j { width: 34px; }
.c-k { width: 107px; }

.grid tr {
    height: 24px;
}

.grid .col-heads {
    height: 23px;
}

.grid th {
    padding: 2px 0 0;
    font-weight: 400;
    line-height: 20px;
    background-color: #e6e6e6;
    text-align: center;
    border-right: 1px solid #b9b9b9;
    border-bottom: 1px solid #c6c6c6;
    overflow: hidden;
}

.grid .col-heads th {
    padding: 0;
    border-bottom: 1px solid #9f9f9f;
}

.grid th.on {
    background-color: #d2d2d2;
    color: #1a6b6b;
}

.corner {
    position: relative;
}

.corner i {
    position: absolute;
    right: 3px;
    bottom: 3px;
    border-left: 15px solid transparent;
    border-bottom: 15px solid #bdbdbd;
}

.grid td {
    padding: 2px 0 0 3px;
    background-color: #ffff99;
    white-space: pre;
    overflow: hidden;
    line-height: 22px;
    position: relative;
}

.head-row td {
    background-color: #808000;
}

.grid td.tight {
    letter-spacing: -0.4px;
}

.m::before {
    content: "";
    position: absolute;
    top: 0;
    left: 0;
    border-top: 6px solid #1e7b1e;
    border-right: 7px solid transparent;
}

.grid td.sel {
    overflow: visible;
    z-index: 2;
}

.sel::after {
    content: "";
    position: absolute;
    top: -1px;
    left: -1px;
    right: -2px;
    bottom: -1px;
    border: 2px solid #217346;
    box-shadow: inset 0 0 0 1px #fff;
}

.sel::before {
    content: "";
    position: absolute;
    right: -4px;
    bottom: -3px;
    width: 6px;
    height: 6px;
    background-color: #217346;
    border: 1px solid #fff;
    z-index: 1;
}

.vscroll {
    width: 24px;
    padding: 2px 3px 0 2px;
    display: flex;
    flex-direction: column;
    background-color: #f1f1f1;
}

.sb-btn {
    height: 18px;
    flex: none;
    background-color: #fff;
    border: 1px solid #a6a6a6;
    display: flex;
    align-items: center;
    justify-content: center;
}

.sb-thumb {
    height: 21px;
    flex: none;
    margin-top: 1px;
    background-color: #fff;
    border: 1px solid #a6a6a6;
}

.sb-track {
    flex: 1;
}

/* sheet tabs */
.tabbar {
    height: 29px;
    flex: none;
    display: flex;
    align-items: flex-start;
}

.tab-nav {
    width: 103px;
    height: 26px;
    padding-left: 28px;
    display: flex;
    align-items: center;
    gap: 23px;
}

.sheet-tab {
    width: 80px;
    height: 26px;
    background-color: #fff;
    border-bottom: 2px solid #217346;
    color: #217346;
    font-weight: 700;
    font-size: 15.5px;
    line-height: 23px;
    text-align: center;
}

.add-sheet {
    margin: 5px 0 0 32px;
}

.hscroll {
    width: 535px;
    height: 18px;
    margin: 5px 25px 0 auto;
    display: flex;
    background-color: #f1f1f1;
}

.hs-btn {
    width: 18px;
    flex: none;
    background-color: #fff;
    border: 1px solid #a6a6a6;
    display: flex;
    align-items: center;
    justify-content: center;
}

.hs-thumb {
    width: 284px;
    flex: none;
    background-color: #fff;
    border: 1px solid #a6a6a6;
}

.hs-track {
    flex: 1;
}

/* status bar */
.statusbar {
    height: 27px;
    flex: none;
    display: flex;
    align-items: center;
    padding-left: 9px;
    background-color: #f3f2f1;
    border-top: 1px solid #c8c6c4;
    font-size: 12.6px;
    color: #605e5c;
}

.ready {
    width: 61px;
}

.st-macro {
    margin-right: 22px;
}

.access-text {
    margin-left: 1px;
}

.views {
    margin-left: auto;
    height: 26px;
    display: flex;
}

.view-btn {
    width: 50px;
    display: flex;
    align-items: center;
    justify-content: center;
}

.view-btn.active {
    background-color: #d2d0ce;
}

.zoom-minus {
    margin-left: 7px;
}

.zoom-slider {
    width: 125px;
    height: 1px;
    margin-left: 6px;
    background-color: #555;
    position: relative;
}

.zoom-slider i {
    position: absolute;
    left: 60px;
    top: -7px;
    width: 6px;
    height: 15px;
    background-color: #444;
}

.zoom-plus {
    margin-left: 6px;
}

.zoom-value {
    width: 43px;
    margin: 0 25px 0 3px;
    text-align: right;
}
```
